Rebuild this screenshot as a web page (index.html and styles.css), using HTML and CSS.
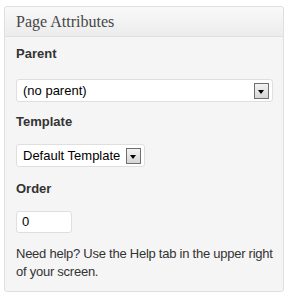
FILE: index.html
```html
<!doctype html>
<html lang="en">
  <head>
    <meta charset="UTF-8" />
    <title>Page Attributes</title>
    <link rel="stylesheet" href="styles.css">
  </head>
  <body>
    <div class="postbox">
      <h3 class="hndle">Page Attributes</h3>
      <div class="inside">
        <p class="label label-first">Parent</p>
        <div class="select select-wide">
          <span>(no parent)</span>
          <span class="arrow"></span>
        </div>

        <p class="label">Template</p>
        <div class="select select-fit">
          <span>Default Template</span>
          <span class="arrow"></span>
        </div>

        <p class="label">Order</p>
        <div class="text-input">0</div>

        <p class="help">Need help? Use the Help tab in the upper right of your screen.</p>
      </div>
    </div>
  </body>
</html>
```

FILE: styles.css
```css
body {
  margin: 0;
  font-family: "Liberation Sans", Arial, sans-serif;
  font-size: 13px;
  line-height: 18px;
  color: #333;
  background: #fff;
}
.postbox {
  margin: 6px 6px 0 4px;
  border: 1px solid #dfdfdf;
  border-radius: 3px;
  background: #f5f5f5;
}
.hndle {
  margin: 0;
  height: 29px;
  padding-left: 11px;
  font-family: "Liberation Serif", "Times New Roman", serif;
  font-size: 16px;
  font-weight: normal;
  line-height: 29px;
  color: #464646;
  border-bottom: 1px solid #dfdfdf;
  border-radius: 3px 3px 0 0;
  background: linear-gradient(to bottom, #f9f9f9, #ececec);
}
.inside {
  padding: 8px 10px 10px 11px;
}
.label {
  margin: 0 0 13px;
  font-weight: bold;
}
.label-first {
  margin-bottom: 16px;
}
.select {
  display: flex;
  align-items: center;
  gap: 6px;
  box-sizing: border-box;
  height: 23px;
  padding: 0 3px 0 6px;
  border: 1px solid #dfdfdf;
  border-radius: 3px;
  background: #fff;
  color: #000;
}
.select-wide {
  justify-content: space-between;
  margin-bottom: 11px;
}
.select-fit {
  width: fit-content;
  margin-bottom: 13px;
}
.arrow {
  position: relative;
  box-sizing: border-box;
  width: 15px;
  height: 16px;
  border: 1px solid #6f6f6f;
  background: linear-gradient(to bottom, #f2f2f2, #d6d6d6);
}
.arrow::after {
  content: "";
  position: absolute;
  left: 3px;
  top: 6px;
  border-left: 3.5px solid transparent;
  border-right: 3.5px solid transparent;
  border-top: 4px solid #000;
}
.text-input {
  box-sizing: border-box;
  width: 56px;
  height: 22px;
  padding-left: 5px;
  line-height: 20px;
  margin-bottom: 12px;
  border: 1px solid #dfdfdf;
  border-radius: 3px;
  background: #fff;
  color: #000;
}
.help {
  margin: 0 -8px 0 0;
  letter-spacing: -0.25px;
}
```
